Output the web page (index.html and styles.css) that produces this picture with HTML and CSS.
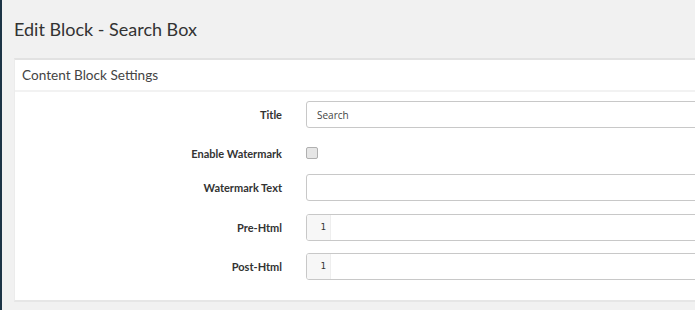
FILE: index.html
```html
<!DOCTYPE html>
<html>
<head>
<meta charset="utf-8">
<link rel="stylesheet" href="styles.css">
</head>
<body>
<div class="page">
  <h1 class="page-title">Edit Block - Search Box</h1>
  <div class="panel">
    <div class="panel-heading">Content Block Settings</div>
    <div class="panel-body">
      <div class="row">
        <label class="label">Title</label>
        <div class="field"><input class="input" type="text" value="Search"></div>
      </div>
      <div class="row row-check">
        <label class="label">Enable Watermark</label>
        <div class="field"><span class="checkbox"></span></div>
      </div>
      <div class="row row-wide">
        <label class="label">Watermark Text</label>
        <div class="field"><input class="input" type="text" value=""></div>
      </div>
      <div class="row">
        <label class="label">Pre-Html</label>
        <div class="field"><div class="editor"><div class="gutter">1</div><div class="code"></div></div></div>
      </div>
      <div class="row">
        <label class="label">Post-Html</label>
        <div class="field"><div class="editor"><div class="gutter">1</div><div class="code"></div></div></div>
      </div>
    </div>
  </div>
</div>
</body>
</html>
```
FILE: styles.css
```css
html, body {
  margin: 0;
  padding: 0;
}
body {
  background: #f1f1f1;
  width: 695px;
  height: 310px;
  overflow: hidden;
  font-family: Lato, "Open Sans", sans-serif;
  color: #333;
}
.page {
  border-left: 2px solid #1c3446;
  height: 310px;
  padding-left: 12px;
  box-sizing: border-box;
  overflow: hidden;
}
.page-title {
  margin: 0;
  padding-top: 17px;
  height: 58px;
  box-sizing: border-box;
  font-size: 18px;
  font-weight: 400;
  line-height: 24px;
  color: #333;
}
.panel {
  width: 720px;
  background: #fff;
  border-top: 2px solid #e2e2e2;
  border-bottom: 2px solid #e6e6e6;
  border-left: 1px solid #ececec;
  box-sizing: border-box;
}
.panel-heading {
  height: 32px;
  line-height: 31px;
  padding-left: 7px;
  font-size: 13.6px;
  color: #444;
  border-bottom: 2px solid #f2f2f2;
  box-sizing: border-box;
}
.panel-body {
  padding: 9px 0 20px 0;
}
.row {
  display: flex;
  align-items: center;
  height: 27px;
  margin-bottom: 12px;
}
.row:last-child {
  margin-bottom: 0;
}
.row-check {
  height: 26px;
  margin-bottom: 8px;
}
.row-wide {
  margin-bottom: 13px;
}
.label {
  width: 267px;
  text-align: right;
  font-size: 11px;
  font-weight: 700;
  color: #333;
  flex-shrink: 0;
}
.field {
  margin-left: 24px;
  flex: 1;
  display: flex;
  align-items: center;
}
.input {
  width: 100%;
  height: 27px;
  box-sizing: border-box;
  border: 1px solid #c8c8c8;
  border-radius: 3px;
  padding: 0 10px;
  font-family: "Open Sans", Lato, sans-serif;
  font-size: 10px;
  color: #444;
  background: #fff;
  outline: none;
}
.checkbox {
  display: block;
  width: 10px;
  height: 10px;
  border: 1px solid #b0b0b0;
  border-radius: 2px;
  background: #e6e6e6;
}
.editor {
  width: 100%;
  height: 27px;
  box-sizing: border-box;
  border: 1px solid #c8c8c8;
  border-radius: 3px;
  display: flex;
  overflow: hidden;
}
.gutter {
  width: 24px;
  background: #f7f7f7;
  border-right: 1px solid #eee;
  font-family: "DejaVu Sans Mono", monospace;
  font-size: 9px;
  color: #333;
  text-align: right;
  padding-right: 4px;
  box-sizing: border-box;
  line-height: 25px;
}
.code {
  flex: 1;
}
```
